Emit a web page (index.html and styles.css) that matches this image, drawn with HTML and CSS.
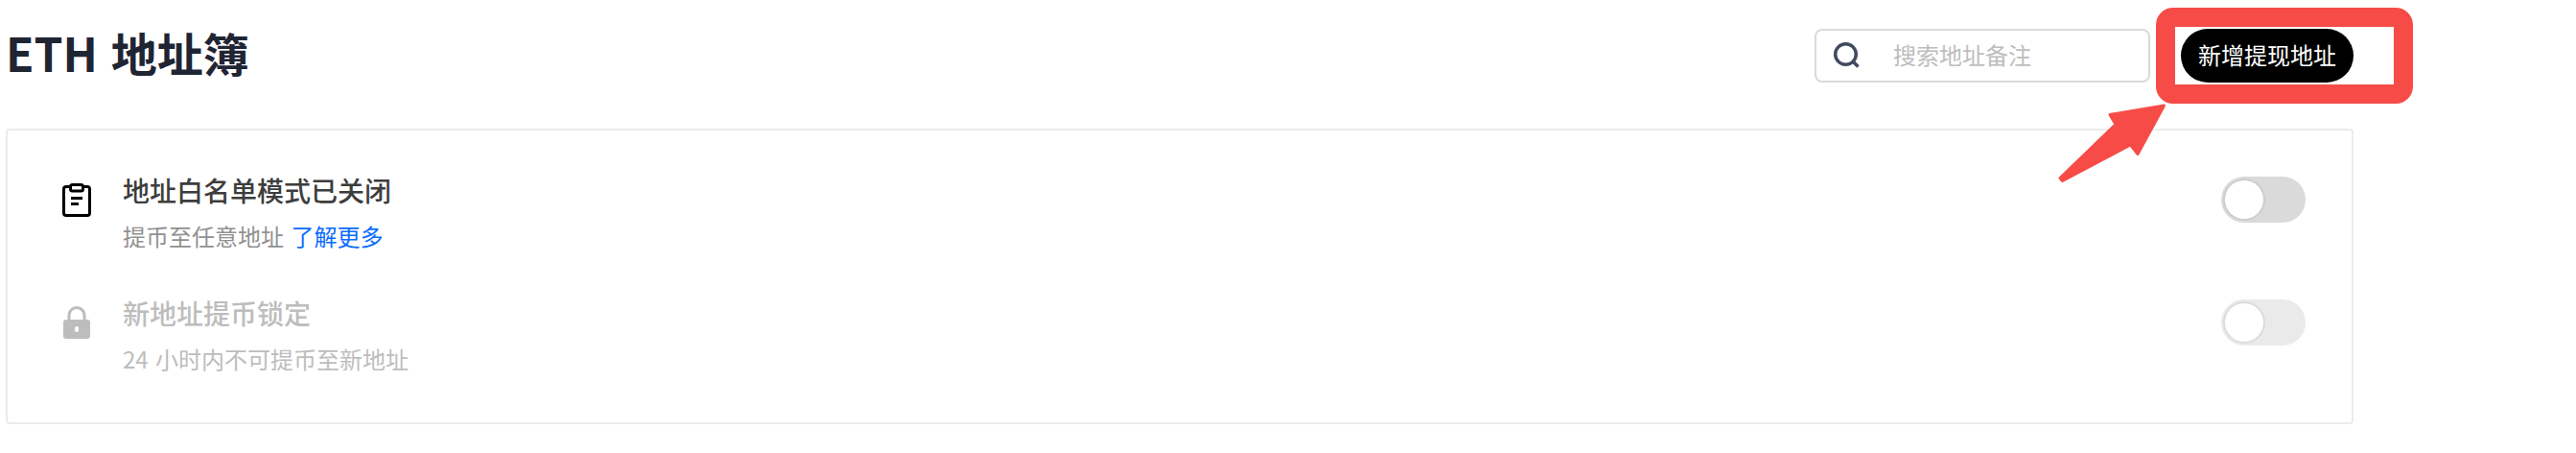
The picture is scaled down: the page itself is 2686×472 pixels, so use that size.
FILE: index.html
```html
<!DOCTYPE html>
<html lang="zh-CN">
<head>
    <meta charset="UTF-8">
    <title>ETH 地址簿</title>
    <link rel="stylesheet" href="styles.css">
</head>
<body>
    <div class="container">
        <header class="header">
            <h1>ETH 地址簿</h1>
            <div class="actions">
                <label class="search">
                    <svg class="search-icon" viewBox="0 0 32 32">
                        <circle cx="14.5" cy="14.5" r="10.800"/>
                        <path d="M22 22l5.500 5.500"/>
                    </svg>
                    <input type="text" placeholder="搜索地址备注">
                </label>
                <button class="add-btn">新增提现地址</button>
            </div>
        </header>

        <div class="card">
            <div class="row">
                <svg class="row-icon" viewBox="0 0 40 40">
                    <path class="line" d="M13 6.5H9a2.5 2.5 0 0 0-2.5 2.5v25a2.5 2.5 0 0 0 2.5 2.5h22a2.5 2.5 0 0 0 2.5-2.5v-25a2.5 2.5 0 0 0-2.5-2.5h-4"/>
                    <rect class="line" x="13.5" y="4.5" width="13" height="6.5" rx="2"/>
                    <path class="line" d="M14 18.5h12M14 24.5h8"/>
                </svg>
                <div class="row-text">
                    <h3>地址白名单模式已关闭</h3>
                    <p>提币至任意地址 <a href="#">了解更多</a></p>
                </div>
                <div class="switch"></div>
            </div>

            <div class="row disabled">
                <svg class="row-icon" viewBox="0 0 40 40">
                    <path class="line" d="M12 19v-6.500a8 8 0 0 1 16 0v6.500"/>
                    <path class="fill" fill-rule="evenodd" d="M9 17h22a3 3 0 0 1 3 3v14a3 3 0 0 1-3 3H9a3 3 0 0 1-3-3V20a3 3 0 0 1 3-3zM20 24a2 2 0 0 0-2 2v2a2 2 0 0 0 4 0v-2a2 2 0 0 0-2-2z"/>
                </svg>
                <div class="row-text">
                    <h3>新地址提币锁定</h3>
                    <p>24 小时内不可提币至新地址</p>
                </div>
                <div class="switch"></div>
            </div>
        </div>
    </div>

    <!-- Callout around the add button -->
    <div class="highlight"></div>
    <svg class="arrow" viewBox="0 0 120 90">
        <path d="M112.500 2L56 11.500L62 21.500L4 77.500L6.500 80.500L77.500 43L85 52.500Z"/>
    </svg>
</body>
</html>
```

FILE: styles.css
```css
body {
    margin: 0;
    background-color: #fff;
    font-family: "Noto Sans CJK SC", sans-serif;
}

h1, h3, p {
    margin: 0;
}

.container {
    width: 2448px;
    margin-left: 6px;
    padding-top: 30px;
}

.header {
    display: flex;
    justify-content: space-between;
    height: 56px;
    margin-bottom: 48px;
}

h1 {
    font-size: 48px;
    line-height: 48px;
    font-weight: 700;
    word-spacing: 3px;
    color: #1f2533;
}

.actions {
    display: flex;
    gap: 32px;
}

.search {
    display: flex;
    align-items: center;
    box-sizing: border-box;
    width: 350px;
    height: 56px;
    padding-left: 16px;
    border: 2px solid #dadada;
    border-radius: 8px;
}

.search-icon {
    width: 32px;
    height: 32px;
    margin-right: 32px;
    fill: none;
    stroke: #424a5e;
    stroke-width: 3.5;
}

.search input {
    width: 240px;
    padding: 0 0 3px;
    border: none;
    outline: none;
    background: none;
    font-family: inherit;
    font-size: 24px;
}

.search input::placeholder {
    color: #bdbdbd;
}

.add-btn {
    width: 180px;
    height: 56px;
    padding: 0 0 3px;
    border: none;
    border-radius: 28px;
    background-color: #000;
    color: #fff;
    font-family: inherit;
    font-size: 24px;
    cursor: pointer;
}

.card {
    box-sizing: border-box;
    height: 308px;
    padding: 40px 48px 0 52px;
    border: 2px solid #ebebeb;
    border-radius: 4px;
}

.row {
    display: flex;
    height: 128px;
}

.row-icon {
    width: 40px;
    height: 40px;
    margin: 12px 28px 0 0;
}

.line {
    fill: none;
    stroke: #000;
    stroke-width: 3;
}

.row-text {
    flex: 1;
}

h3 {
    font-size: 28px;
    line-height: 44px;
    font-weight: 500;
    color: #3d3d3d;
}

p {
    margin-top: 6px;
    font-size: 24px;
    line-height: 40px;
    word-spacing: 2px;
    color: #919191;
}

a {
    color: #0a6cff;
    text-decoration: none;
}

.switch {
    box-sizing: border-box;
    width: 88px;
    height: 48px;
    margin-top: 8px;
    padding: 4px;
    border-radius: 24px;
    background-color: #dadada;
}

.switch::before {
    content: "";
    display: block;
    width: 40px;
    height: 40px;
    border-radius: 50%;
    background-color: #fff;
    box-shadow: 0 0 0 2px rgba(0, 0, 0, 0.06);
}

.disabled h3, .disabled p {
    color: #bdbdbd;
}

.disabled .line {
    stroke: #bdbdbd;
}

.disabled .fill {
    fill: #bdbdbd;
}

.disabled .switch {
    background-color: #eaeaea;
}

.highlight {
    position: absolute;
    left: 2248px;
    top: 8px;
    box-sizing: border-box;
    width: 268px;
    height: 100px;
    border: 20px solid #f74b47;
    border-radius: 18px;
    pointer-events: none;
}

.arrow {
    position: absolute;
    left: 2144px;
    top: 108px;
    width: 120px;
    height: 90px;
    fill: #f74b47;
    stroke: #f74b47;
    stroke-width: 3;
    stroke-linejoin: round;
    pointer-events: none;
}
```
